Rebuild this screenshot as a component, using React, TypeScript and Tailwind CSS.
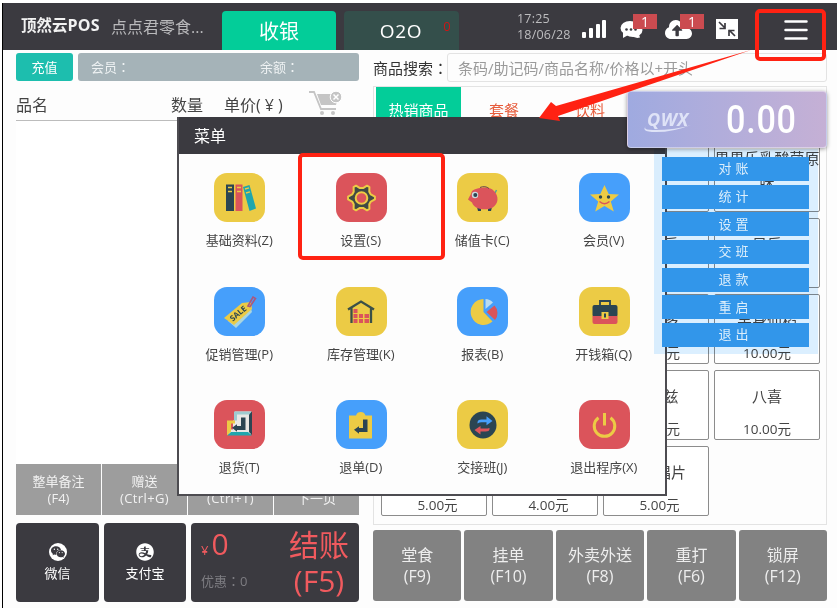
import React from "react";
import { AiFillAlipayCircle, AiFillWechat } from "react-icons/ai";
import { FaCloudUploadAlt } from "react-icons/fa";

const products: { name: string; price: string }[] = [
  { name: "", price: "" },
  { name: "", price: "" },
  { name: "", price: "" },
  { name: "界界乐乳酸菌原味", price: "" },
  { name: "", price: "" },
  { name: "", price: "" },
  { name: "优乳乐", price: "" },
  { name: "星乐", price: "" },
  { name: "", price: "" },
  { name: "", price: "" },
  { name: "养乐多", price: "10.00元" },
  { name: "果身仙稻", price: "10.00元" },
  { name: "", price: "" },
  { name: "", price: "" },
  { name: "好丽兹", price: "10.00元" },
  { name: "八喜", price: "10.00元" },
  { name: "", price: "5.00元" },
  { name: "", price: "4.00元" },
  { name: "原味唱片", price: "5.00元" },
];

const RED = "#db545b";
const YELLOW = "#eccb45";
const BLUE = "#469ffb";
const NAVY = "#2b4552";

function Tile({ fill, children }: { fill: string; children: React.ReactNode }) {
  return (
    <svg width="51" height="49" viewBox="0 0 51 49">
      <rect width="51" height="49" rx="13" fill={fill} />
      {children}
    </svg>
  );
}

// Six-toothed gear outline centred on (25.5, 25), with teeth at 0°, 60°, ...
const gearPoints = Array.from({ length: 6 }, (_, k) =>
  [
    [-6, 13.5],
    [6, 13.5],
    [21, 10],
    [39, 10],
  ]
    .map(([offset, r]) => {
      const a = ((k * 60 + offset) * Math.PI) / 180;
      return `${(25.5 + r * Math.cos(a)).toFixed(1)},${(25 + r * Math.sin(a)).toFixed(1)}`;
    })
    .join(" "),
).join(" ");

const menuItems: { label: string; icon: React.ReactNode }[] = [
  {
    label: "基础资料(Z)",
    icon: (
      <Tile fill={YELLOW}>
        <rect x="12" y="11.5" width="8" height="26.5" fill={NAVY} />
        <rect x="21.500" y="11.5" width="7" height="26.5" fill={RED} />
        <path d="M29 14 L35.5 12 L42 35.5 L35.5 38 Z" fill="#20a6ad" />
        <path d="M14 14.5h4M14 18.5h4M23 14.5h4M23 18.5h4M31 16l4-1.2M32 20l4-1.2" stroke={YELLOW} strokeWidth="1.4" />
      </Tile>
    ),
  },
  {
    label: "设置(S)",
    icon: (
      <Tile fill={RED}>
        <polygon points={gearPoints} fill="#3f4a45" stroke={YELLOW} strokeWidth="2" strokeLinejoin="round" />
        <circle cx="25.5" cy="25" r="5.8" fill={RED} stroke={YELLOW} strokeWidth="2" />
      </Tile>
    ),
  },
  {
    label: "储值卡(C)",
    icon: (
      <Tile fill={YELLOW}>
        <path d="M38 20l1.5-3" stroke="#52a893" strokeWidth="1.5" />
        <path d="M20 34h4v4h-3zM31 34h4l-1 4h-3z" fill={NAVY} />
        <path d="M15 18c5-3.500 17-5.500 22 0 5 5 5 13-2 17-5 2-11 1.5-15 0-3-2-4-3-5-5.500l-4-3 1.5-3 1-1.5z" fill={RED} />
        <path d="M23 14.500c3-1.5 7-1 9 1" stroke="#6b4a4c" fill="none" />
        <circle cx="18" cy="22" r="3.2" fill="#c9dce0" />
        <circle cx="18.3" cy="22" r="2" fill={NAVY} />
      </Tile>
    ),
  },
  {
    label: "会员(V)",
    icon: (
      <Tile fill={BLUE}>
        <path d="M25.5 12l4.2 9.1 10.3.4-8.2 7 3 10-9.3-5.4-9.3 5.4 3-10-8.2-7 10.3-.4z" fill={YELLOW} />
        <circle cx="21.5" cy="24" r="1.7" fill={NAVY} />
        <circle cx="29.5" cy="24" r="1.7" fill={NAVY} />
        <path d="M20.5 28.5q5 4.5 10 0" fill="none" stroke={RED} strokeWidth="1.5" />
      </Tile>
    ),
  },
  {
    label: "促销管理(P)",
    icon: (
      <Tile fill={BLUE}>
        <path d="M14 34 L36 18 L38 25 L22 41 Z" fill="#a9d5df" />
        <path d="M10 31 L28 16 L37 15 L38 22 L20 38 Z" fill={YELLOW} />
        <path d="M34 19l5-9 2.5 1.5-5.5 8z" fill="none" stroke="#a9587f" strokeWidth="1.6" />
        <text x="24.5" y="29.5" textAnchor="middle" fontSize="8" fontWeight="700" fontFamily="Open Sans, sans-serif" fill={NAVY} transform="rotate(-40 24 27)">
          SALE
        </text>
      </Tile>
    ),
  },
  {
    label: "库存管理(K)",
    icon: (
      <Tile fill={YELLOW}>
        <path d="M12 22.5 L25 14.5 L38 22.5 M15.5 20.5 V36 M35 20.5 V36" fill="none" stroke="#3b5048" strokeWidth="2.3" />
        <path d="M17.5 22h4v4h-4zM17.5 27h4v4h-4zM17.5 32h4v4h-4zM23 27h4v4h-4zM23 32h4v4h-4zM28.5 27h4.5v4h-4.5zM28.5 32h4.5v4h-4.5z" fill={RED} />
      </Tile>
    ),
  },
  {
    label: "报表(B)",
    icon: (
      <Tile fill={BLUE}>
        <path d="M26.5 25V12A13 13 0 1 0 35.5 34.5Z" fill={YELLOW} />
        <path d="M28.5 22V12A11 11 0 0 1 36 15.5Z" fill="#b9dcf0" />
        <path d="M29.5 25L37.5 18.5A11 11 0 0 1 38 33Z" fill={RED} />
      </Tile>
    ),
  },
  {
    label: "开钱箱(Q)",
    icon: (
      <Tile fill={YELLOW}>
        <path d="M21 19v-5h10v5" fill="none" stroke={NAVY} strokeWidth="1.8" />
        <rect x="13.5" y="18" width="25" height="12" rx="2" fill={NAVY} />
        <path d="M13.5 29h25v6q0 2-2 2h-21q-2 0-2-2z" fill={RED} />
        <rect x="22.500" y="25" width="7" height="7" fill={YELLOW} />
        <path d="M25 26.500h2v4h-2z" fill={NAVY} />
      </Tile>
    ),
  },
  {
    label: "退货(T)",
    icon: (
      <Tile fill={RED}>
        <path d="M21 11.5h16v23H14l2-5h3v-9h2z" fill="#e9e8e5" />
        <path d="M20 11.5h18l-3 3H23v6h-3z" fill="#9fcbd0" />
        <path d="M38 11.5V35l-3-3V14.5z" fill={NAVY} />
        <path d="M13 35.5l4-3.500h17l4 3.500z" fill="#20a6ad" />
        <path d="M13 20.5h8v3h-4v8l-4 4z" fill={YELLOW} />
        <path d="M27 17.5h4.5V30H23v1.8L18 27.8l5-3.5v1.6h4z" fill={NAVY} />
      </Tile>
    ),
  },
  {
    label: "退单(D)",
    icon: (
      <Tile fill={BLUE}>
        <path d="M13 15.5h7a5 5 0 0 1 9.5 0H36v23H13z" fill={YELLOW} />
        <path d="M27 19.5h4.5V32H23v1.8L18 29.8l5-3.5v1.6h4z" fill={NAVY} />
      </Tile>
    ),
  },
  {
    label: "交接班(J)",
    icon: (
      <Tile fill={YELLOW}>
        <circle cx="26" cy="25" r="13.5" fill={NAVY} />
        <path d="M20.5 23.5v-1q0-3 4-3h5v-3.2l6 4.7-6 4.2v-3h-5q-2 0-4 1.3z" fill={BLUE} />
        <path d="M32.5 28v1q0 2.500-4 2.500h-5v3l-6-4.500 6-4v2.500h5q2 0 4-.5z" fill={RED} />
      </Tile>
    ),
  },
  {
    label: "退出程序(X)",
    icon: (
      <Tile fill={RED}>
        <path d="M19.500 17.700a10.300 10.300 0 1 0 12 0M25.500 13v12.500" fill="none" stroke={YELLOW} strokeWidth="3" />
      </Tile>
    ),
  },
];

function Colon() {
  return <span className="font-['Noto_Sans_CJK_TC',sans-serif]">：</span>;
}

function Header() {
  return (
    <header className="flex h-[47px] items-start bg-[#3b3a40]">
      <div className="mt-[12px] ml-[18px] w-[84px] whitespace-nowrap text-[15.500px] leading-[21px] font-bold text-[#f2f2f2]">
        顶然云<span className="text-[16px] tracking-[0.2px]">POS</span>
      </div>
      <div className="mt-[13px] ml-[6px] w-[111px] whitespace-nowrap text-[16px] leading-[22px] text-[#b9b9bb]">点点君零食...</div>
      <div className="mt-[8px] flex h-[39px] w-[114px] items-center justify-center rounded-t-[4px] bg-[#03cd99] pt-[2px] text-[20px] text-white">收银</div>
      <div className="mt-[8px] ml-[8px] flex h-[39px] w-[115px] items-center justify-center rounded-t-[4px] bg-[#344f4b] text-[19px] tracking-[0.7px] text-white">
        <span className="mt-[2px] ml-[28px]">O2O</span>
        <span className="mb-[8px] ml-[21px] text-[13px] text-[#cc1616]">0</span>
      </div>
      <div className="mt-[8px] ml-[58px] w-[65px] whitespace-nowrap text-[12.500px] leading-[16px] tracking-[0.2px] text-[#bdbdbf]">
        <div>17:25</div>
        <div>18/06/28</div>
      </div>
      <svg className="mt-[15px]" width="26" height="24" fill="#fff">
        <rect x="0" y="14" width="4" height="6" rx="1" />
        <rect x="7" y="10" width="4" height="10" rx="1" />
        <rect x="14" y="6" width="4" height="14" rx="1" />
        <rect x="20" y="2" width="4" height="18" rx="1" />
      </svg>
      <div className="relative mt-[14px] ml-[12px] w-[45px]">
        <svg width="24" height="24" fill="#fff">
          <ellipse cx="13" cy="13" rx="9.500" ry="7" />
          <path d="M11 18q4 4 9 2.500l-1-3z" />
          <ellipse cx="10" cy="11" rx="9.500" ry="7" />
          <path d="M3 14v7l7-4z" />
          <circle cx="6.500" cy="12.500" r="1.300" fill="#3b3a40" />
          <circle cx="11" cy="12.500" r="1.300" fill="#3b3a40" />
          <circle cx="15.500" cy="12.500" r="1.300" fill="#3b3a40" />
        </svg>
        <span className="absolute -top-[3px] left-[13px] h-[15px] w-[24px] bg-[#cb4b50] text-center text-[14px] leading-[16px] text-white">1</span>
      </div>
      <div className="relative mt-[13px] w-[51px]">
        <FaCloudUploadAlt size={27} color="#fff" />
        <span className="absolute -top-[2px] left-[15px] h-[15px] w-[24px] bg-[#cb4b50] text-center text-[14px] leading-[16px] text-white">1</span>
      </div>
      <svg className="mt-[16px]" width="23" height="21">
        <rect width="22" height="20" fill="#fff" />
        <path d="M3 3l6 6M9 4v5.500H3.500M19 17l-6-6M18.500 11.500H13V17" fill="none" stroke="#3b3a40" strokeWidth="1.700" />
      </svg>
      <svg className="mt-[16px] ml-[45px]" width="24" height="22">
        <path d="M1.500 2.500h21M1.500 11h21M1.500 19.500h21" stroke="#fff" strokeWidth="2.500" strokeLinecap="round" />
      </svg>
    </header>
  );
}

function OrderPane() {
  return (
    <section className="flex w-[343px] flex-col">
      <div className="mt-[3px] flex h-[28px] gap-[5px] text-[13px]">
        <div className="flex w-[57px] items-center justify-center rounded-[3px] bg-[#1dbeae] pt-px text-white">充值</div>
        <div className="flex flex-1 items-center rounded-[3px] bg-[#a5b3b8] pt-px pl-[13px] text-[#eef2f3]">
          <span className="w-[169px]">会员<Colon /></span>
          <span>余额<Colon /></span>
        </div>
      </div>
      <div className="flex h-[40px] items-center border-b border-[#bcbcbc] pt-[8px] text-[16px] text-[#444]">
        <span className="w-[155px]">品名</span>
        <span className="w-[53px]">数量</span>
        <span className="w-[84px] whitespace-nowrap">
          单价(<span className="mx-[4px]">¥</span>)
        </span>
        <svg width="36" height="28" className="-mt-[5px] shrink-0">
          <path d="M1 4h5l7 17h15" fill="none" stroke="#c5c5c5" strokeWidth="1.800" />
          <path d="M9 6h22l-3 11H13z" fill="#c5c5c5" />
          <circle cx="14" cy="25" r="2" fill="#c5c5c5" />
          <circle cx="25" cy="25" r="2" fill="#c5c5c5" />
          <circle cx="28" cy="9" r="5.800" fill="#c5c5c5" stroke="#fff" />
          <path d="M25.500 6.500l5 5m0-5l-5 5" stroke="#fff" strokeWidth="1.500" />
        </svg>
      </div>
      <div className="h-[343px] bg-white" />
      <div className="grid h-[51px] grid-cols-4 gap-px text-center text-[13px] leading-[17px] text-[#f1f1f1]">
        <div className="bg-[#9d9d9d] pt-[9px]">整单备注<br />(F4)</div>
        <div className="bg-[#9d9d9d] pt-[9px]">赠送<br /><span className="tracking-[0.4px]">(Ctrl+G)</span></div>
        <div className="bg-[#9d9d9d] pt-[26px] tracking-[0.4px]">(Ctrl+T)</div>
        <div className="bg-[#9d9d9d] pt-[26px]">下一页</div>
      </div>
      <div className="mt-[8px] flex h-[79px] text-white">
        <div className="flex w-[83px] flex-col items-center rounded-[4px] bg-[#3b3a40] pt-[20px] text-[13px]">
          <span className="flex size-[18px] items-center justify-center rounded-full bg-white">
            <AiFillWechat size={16} color="#3b3a40" />
          </span>
          <span className="mt-[3px]">微信</span>
        </div>
        <div className="ml-[5px] flex w-[82px] flex-col items-center rounded-[4px] bg-[#3b3a40] pt-[19px] text-[13px]">
          <AiFillAlipayCircle size={20} />
          <span className="mt-[2px]">支付宝</span>
        </div>
        <div className="ml-[5px] flex flex-1 justify-between rounded-[4px] bg-[#3b3a40] pr-[10px] pl-[10px]">
          <div>
            <div className="mt-[3px] h-[36px] text-[30px] leading-[36px] text-[#f05a5e]">
              <span className="mr-[3px] text-[13px]">¥</span>0
            </div>
            <div className="mt-[9px] text-[13px] leading-[20px] text-[#7e7d82]">优惠<Colon />0</div>
          </div>
          <div className="pt-[4px] text-center text-[30px] leading-[36px] text-[#f05a5e]">结账<br />(F5)</div>
        </div>
      </div>
    </section>
  );
}

function GoodsPane() {
  return (
    <section className="ml-[14px] flex w-[454px] flex-col">
      <div className="mt-[3px] flex h-[29px] items-center">
        <div className="w-[74px] pt-px whitespace-nowrap text-[15px] text-[#333]">商品搜索<Colon /></div>
        <div className="flex h-[29px] flex-1 items-center rounded-[3px] border border-[#e3e3e3] pt-px pl-[10px] text-[15px] whitespace-nowrap text-[#9a9a9a]">条码/助记码/商品名称/价格以+开头</div>
      </div>
      <div className="mt-[4px] flex h-[439px] flex-col border border-[#e3e3e3] pl-[2px]">
        <div className="flex h-[46px] text-[15px] text-[#e75c3c]">
          <div className="flex w-[85px] items-center justify-center bg-[#03cd99] text-white">热销商品</div>
          <div className="flex w-[86px] items-center justify-center">套餐</div>
          <div className="flex w-[86px] items-center justify-center">饮料</div>
        </div>
        <div className="mt-[9px] ml-[5px] grid w-[439px] grid-cols-4 gap-x-[5px] gap-y-[6px]">
          {products.map((p, i) => (
            <div key={i} className="flex h-[70px] flex-col items-center justify-between rounded-[2px] border border-[#8c8c8c] bg-white pt-[4px] text-center text-[#444]">
              <div className={p.name.length > 6 ? "w-[106px] shrink-0 text-[15px] leading-[23px]" : "pt-[10px] text-[15px] leading-[23px]"}>{p.name}</div>
              <div className={i >= 16 ? "pl-[7px] text-[13.500px] leading-[19px]" : "text-[13.500px] leading-[19px]"}>{p.price}</div>
            </div>
          ))}
        </div>
      </div>
      <div className="mt-[5px] grid h-[71px] grid-cols-5 gap-[3px] text-center text-[16px] leading-[21px] text-[#eee]">
        {[["堂食", "(F9)"], ["挂单", "(F10)"], ["外卖外送", "(F8)"], ["重打", "(F6)"], ["锁屏", "(F12)"]].map(([name, key]) => (
          <div key={name} className="rounded-[3px] bg-[#828282] pt-[15px]">
            {name}
            <br />
            {key}
          </div>
        ))}
      </div>
    </section>
  );
}

function MenuDialog() {
  return (
    <div className="absolute top-[117px] left-[177px] h-[379px] w-[490px] border-r-2 border-b-2 border-l-2 border-[#4d4c51] bg-[#fdfdfd]">
      <div className="flex h-[37px] items-center bg-[#3b3a40] pl-[15px] text-[16px] text-white">菜单</div>
      <div className="grid auto-rows-[113.500px] grid-cols-4 pt-[19px]">
        {menuItems.map((item) => (
          <div key={item.label} className="flex flex-col items-center text-[13px] leading-[20px] text-[#444]">
            {item.icon}
            <span className="mt-[8px] mr-px">{item.label}</span>
          </div>
        ))}
      </div>
    </div>
  );
}

function FloatingWidget() {
  return (
    <>
      <div className="absolute top-[149px] left-[654px] h-[205px] w-[164px] bg-[#dbefff] mix-blend-multiply" />
      <div className="absolute top-[157px] left-[662px] flex flex-col gap-[3.700px]">
        {["对账", "统计", "设置", "交班", "退款", "重启", "退出"].map((t) => (
          <div key={t} className="flex h-[24px] w-[147px] items-center justify-center bg-[#3296ea] text-[13px] tracking-[4px] text-[#dceefb]">{t}</div>
        ))}
      </div>
      <div className="absolute top-[91px] left-[627px] flex h-[57px] w-[200px] items-center rounded-[4px] border border-white/40 bg-gradient-to-r from-[#9faae0] to-[#c5b0d5] shadow-[0_1px_4px_rgba(0,0,0,0.4)]">
        <div className="relative ml-[19px] w-[79px] text-[18px] font-bold tracking-[0.5px] text-[#dfe3f7] italic">
          QWX
          <svg className="absolute top-[15px] -left-[4px]" width="52" height="12">
            <path d="M4 4Q-2 9 10 9Q34 9 48 4Q28 12 9 11Q-3 10 4 4" fill="#dfe3f7" />
          </svg>
        </div>
        <div className="origin-left scale-x-[0.900] font-['Roboto'] text-[38px] leading-[58px] font-medium tracking-[0.800px] text-white">0.00</div>
      </div>
    </>
  );
}

export default function App() {
  return (
    <div className="relative h-[608px] w-[837px] overflow-hidden bg-white pt-[3px] font-['Open_Sans','Noto_Sans_CJK_SC',sans-serif]">
      <div className="ml-[2px] h-[605px] border-l border-black bg-[#fdfdfd]">
        <Header />
        <div className="flex pl-[13px]">
          <OrderPane />
          <GoodsPane />
        </div>
      </div>
      <MenuDialog />
      <FloatingWidget />
      <div className="absolute top-[153px] left-[298px] h-[107px] w-[147px] rounded-[5px] border-4 border-[#ff2213]" />
      <div className="absolute top-[9px] left-[755px] h-[52px] w-[71px] rounded-[5px] border-4 border-[#ff2213]" />
      <svg className="absolute top-0 left-0" width="837" height="608">
        <path d="M751 50L556 106L551 102L539 118L560 121L558 116Z" fill="#ff2213" />
      </svg>
    </div>
  );
}
